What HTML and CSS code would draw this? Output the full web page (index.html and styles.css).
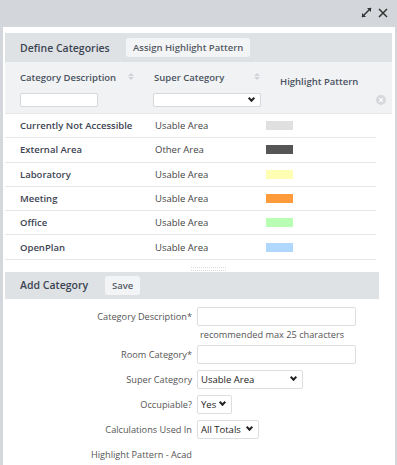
FILE: index.html
```html
<!DOCTYPE html>
<html lang="en">
<head>
    <meta charset="UTF-8">
    <title>Define Categories</title>
    <link rel="stylesheet" href="styles.css">
</head>
<body>
    <div class="dialog">
        <div class="titlebar">
            <svg class="tb-icon" width="11" height="11" viewBox="0 0 11 11">
                <path d="M1 10 L10 1" stroke="#333" stroke-width="1.4"/>
                <path d="M6 1 H10 V5 Z" fill="#333"/>
                <path d="M1 6 V10 H5 Z" fill="#333"/>
            </svg>
            <svg class="tb-icon" width="10" height="10" viewBox="0 0 10 10">
                <path d="M1 1 L9 9 M9 1 L1 9" stroke="#333" stroke-width="1.5"/>
            </svg>
        </div>
        <div class="content">
            <div class="panel-head">
                <span class="panel-title">Define Categories</span>
                <button class="btn">Assign Highlight Pattern</button>
            </div>
            <div class="grid-head">
                <div class="col col1">
                    <div class="col-label">Category Description <span class="sort"></span></div>
                    <input type="text" class="filter-input">
                </div>
                <div class="col col2">
                    <div class="col-label">Super Category <span class="sort"></span></div>
                    <div class="filter-select"><span class="chev"></span></div>
                </div>
                <div class="col col3">
                    <div class="col-label col-label-low">Highlight Pattern</div>
                </div>
                <span class="clear-icon">
                    <svg width="10" height="10" viewBox="0 0 10 10">
                        <circle cx="5" cy="5" r="5" fill="#d6d8db"/>
                        <path d="M3.2 3.2 L6.8 6.8 M6.8 3.2 L3.2 6.8" stroke="#fff" stroke-width="1.2"/>
                    </svg>
                </span>
            </div>
            <ul class="rows">
                <li><span class="c1">Currently Not Accessible</span><span class="c2">Usable Area</span><span class="swatch" style="background:#e0e0e0"></span></li>
                <li><span class="c1">External Area</span><span class="c2">Other Area</span><span class="swatch" style="background:#555555"></span></li>
                <li><span class="c1">Laboratory</span><span class="c2">Usable Area</span><span class="swatch" style="background:#ffffb3"></span></li>
                <li><span class="c1">Meeting</span><span class="c2">Usable Area</span><span class="swatch" style="background:#ff9b3b"></span></li>
                <li><span class="c1">Office</span><span class="c2">Usable Area</span><span class="swatch" style="background:#b8ffb3"></span></li>
                <li><span class="c1">OpenPlan</span><span class="c2">Usable Area</span><span class="swatch" style="background:#b0d8ff"></span></li>
            </ul>
            <div class="resizer"></div>
            <div class="panel-head add-head">
                <span class="panel-title">Add Category</span>
                <button class="btn">Save</button>
            </div>
            <form class="form">
                <div class="frow">
                    <label>Category Description*</label>
                    <input type="text" class="text-input">
                </div>
                <div class="hint">recommended max 25 characters</div>
                <div class="frow">
                    <label>Room Category*</label>
                    <input type="text" class="text-input">
                </div>
                <div class="frow">
                    <label>Super Category</label>
                    <div class="sel sel-super">Usable Area<span class="chev"></span></div>
                </div>
                <div class="frow">
                    <label>Occupiable?</label>
                    <div class="sel sel-occ">Yes<span class="chev"></span></div>
                </div>
                <div class="frow">
                    <label>Calculations Used In</label>
                    <div class="sel sel-calc">All Totals<span class="chev"></span></div>
                </div>
                <div class="frow">
                    <label>Highlight Pattern - Acad</label>
                </div>
            </form>
        </div>
    </div>
</body>
</html>
```

FILE: styles.css
```css
* {
    box-sizing: border-box;
}
body {
    margin: 0;
    background: #fff;
    font-family: "Open Sans", Arial, sans-serif;
    font-size: 10px;
    color: #333;
}
.dialog {
    width: 397px;
    height: 465px;
    overflow: hidden;
}
.titlebar {
    height: 27px;
    background: #d3d6da;
    display: flex;
    justify-content: flex-end;
    align-items: center;
    gap: 6px;
    padding: 0 9px 2px 0;
}
.tb-icon {
    display: block;
}
.content {
    height: 438px;
    border-left: 3px solid #d3d6da;
    border-right: 2px solid #d3d6da;
    padding: 6px 0 0 2px;
}
.panel-head {
    height: 29px;
    background: #dfe2e5;
    display: flex;
    align-items: center;
    padding-left: 15px;
    margin-right: 3px;
}
.panel-title {
    font-size: 10.5px;
    font-weight: 600;
    color: #3c4452;
    width: 106px;
}
.btn {
    font-family: inherit;
    font-size: 9.5px;
    font-weight: 600;
    color: #555c66;
    background: #f3f4f6;
    border: none;
    border-radius: 3px;
    padding: 3px 7px;
    height: 19px;
}
.grid-head {
    position: relative;
    height: 52px;
    background: #f1f2f4;
    display: flex;
    padding: 5px 0 0 15px;
    margin-right: 3px;
    border-bottom: 1px solid #e6e7e9;
}
.col-label {
    font-size: 9.5px;
    font-weight: 600;
    color: #4a5260;
    height: 20px;
    display: flex;
    align-items: center;
    justify-content: space-between;
}
.col-label-low {
    padding-top: 9px;
}
.col1 {
    width: 134px;
}
.col1 .col-label {
    width: 114px;
}
.col2 {
    width: 126px;
}
.col2 .col-label {
    width: 106px;
}
.sort {
    width: 6px;
    height: 10px;
    position: relative;
}
.sort::before, .sort::after {
    content: "";
    position: absolute;
    left: 0;
    border-left: 3px solid transparent;
    border-right: 3px solid transparent;
}
.sort::before {
    top: 1px;
    border-bottom: 3px solid #cfd2d6;
}
.sort::after {
    top: 5px;
    border-top: 3px solid #cfd2d6;
}
.filter-input {
    display: block;
    width: 78px;
    height: 14px;
    margin-top: 6px;
    border: 1px solid #d6d8db;
    border-radius: 2px;
    background: #fff;
}
.filter-select {
    position: relative;
    width: 108px;
    height: 14px;
    margin-top: 6px;
    margin-left: -1px;
    border: 1px solid #d6d8db;
    border-radius: 2px;
    background: #fff;
}
.chev {
    position: absolute;
    right: 6px;
    top: 50%;
    width: 5px;
    height: 5px;
    margin-top: -4px;
    border-right: 2px solid #222;
    border-bottom: 2px solid #222;
    transform: rotate(45deg);
}
.clear-icon {
    position: absolute;
    right: 6px;
    top: 33px;
    line-height: 0;
}
.rows {
    list-style: none;
    margin: 0;
    padding: 0;
    width: 371px;
}
.rows li {
    height: 24.3px;
    display: flex;
    align-items: center;
    padding-left: 15px;
    border-bottom: 1px solid #e6e7e9;
    font-size: 9.5px;
}
.c1 {
    width: 135px;
    font-weight: 600;
    color: #3c4452;
}
.c2 {
    width: 111px;
    color: #444;
}
.swatch {
    width: 27px;
    height: 9px;
}
.resizer {
    height: 12px;
    position: relative;
}
.resizer::before {
    content: "";
    position: absolute;
    left: 186px;
    top: 7px;
    width: 35px;
    height: 2px;
    border-top: 1px dotted #d8dadd;
    border-bottom: 1px dotted #d8dadd;
}
.add-head {
    height: 27px;
    margin-right: 16px;
}
.add-head .panel-title {
    width: 85px;
}
.form {
    padding-top: 8px;
}
.frow {
    display: flex;
    align-items: center;
    min-height: 19px;
    margin-bottom: 6px;
}
.frow label {
    width: 192px;
    text-align: right;
    padding-right: 5px;
    font-size: 9.2px;
    color: #555;
}
.text-input {
    width: 159px;
    height: 19px;
    border: 1px solid #dcdee1;
    border-radius: 2px;
}
.hint {
    margin: -4px 0 4px 195px;
    font-size: 9.2px;
    color: #555;
    height: 13px;
}
.sel {
    position: relative;
    height: 19px;
    border: 1px solid #dcdee1;
    border-radius: 2px;
    padding: 2px 0 0 3px;
    font-size: 9.5px;
    color: #222;
}
.sel-super {
    width: 106px;
}
.sel-occ {
    width: 35px;
}
.sel-calc {
    width: 62px;
}
```
